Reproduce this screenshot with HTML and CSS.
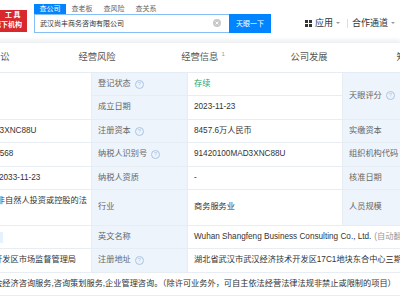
FILE: index.html
```html
<!DOCTYPE html>
<html>
  <head>
    <meta charset="UTF-8" />
    <link rel="stylesheet" href="styles.css">
  </head>

  <body>
    <div class="topbar">
      <div class="logo">
        <span class="logo-top">工具</span>
        <span>旗下机构</span>
      </div>
      <div class="search">
        <div class="search-tabs">
          <span class="search-tab active">查公司</span>
          <span class="search-tab">查老板</span>
          <span class="search-tab">查风险</span>
          <span class="search-tab">查关系</span>
        </div>
        <div class="search-row">
          <div class="search-input">
            <span>武汉尚丰商务咨询有限公司</span>
            <svg class="clear" viewBox="0 0 8 8" width="8" height="8">
              <circle cx="4" cy="4" r="4" fill="#c9c9c9" />
              <path d="M2.6 2.6 L5.4 5.4 M5.4 2.6 L2.6 5.4" stroke="#fff" stroke-width="0.9" />
            </svg>
          </div>
          <button class="search-btn">天眼一下</button>
        </div>
      </div>
      <div class="nav">
        <span class="nav-item">
          <svg class="apps" viewBox="0 0 7 7" width="7" height="7">
            <rect x="0" y="0" width="3" height="3" fill="#333" />
            <rect x="4" y="0" width="3" height="3" fill="#333" />
            <rect x="0" y="4" width="3" height="3" fill="#333" />
            <rect x="4" y="4" width="3" height="3" fill="#333" />
          </svg>
          应用<i class="caret"></i>
        </span>
        <span class="nav-sep"></span>
        <span class="nav-item">合作通道<i class="caret"></i></span>
      </div>
    </div>

    <div class="section-tabs">
      <span class="section-tab">法律诉讼</span>
      <span class="section-tab">经营风险</span>
      <span class="section-tab">经营信息<span class="tab-count">1</span></span>
      <span class="section-tab">公司发展</span>
      <span class="section-tab">知识产权</span>
    </div>

    <div class="info-table">
      <div class="cell label rows-2">法定代表人</div>
      <div class="cell value rows-2"></div>
      <div class="cell label">登记状态<span class="help">?</span></div>
      <div class="cell value status">存续</div>
      <div class="cell label rows-2">天眼评分<span class="help">?</span></div>
      <div class="cell value rows-2"></div>

      <div class="cell label">成立日期</div>
      <div class="cell value">2023-11-23</div>

      <div class="cell label">统一社会信用代码</div>
      <div class="cell value">91420100MAD3XNC88U</div>
      <div class="cell label">注册资本<span class="help">?</span></div>
      <div class="cell value">8457.6万人民币</div>
      <div class="cell label">实缴资本</div>
      <div class="cell value">-</div>

      <div class="cell label">工商注册号</div>
      <div class="cell value">420100000612568</div>
      <div class="cell label">纳税人识别号<span class="help">?</span></div>
      <div class="cell value">91420100MAD3XNC88U</div>
      <div class="cell label">组织机构代码</div>
      <div class="cell value">MAD3XNC8-8</div>

      <div class="cell label">营业期限</div>
      <div class="cell value">2023-11-23 至 2033-11-23</div>
      <div class="cell label">纳税人资质</div>
      <div class="cell value">-</div>
      <div class="cell label">核准日期</div>
      <div class="cell value">2023-11-23</div>

      <div class="cell label">企业类型</div>
      <div class="cell value wrap">有限责任公司(非自然人投资或控股的法人独资)</div>
      <div class="cell label">行业</div>
      <div class="cell value">商务服务业</div>
      <div class="cell label">人员规模</div>
      <div class="cell value">-</div>

      <div class="cell label">曾用名</div>
      <div class="cell value">暂无数据<span class="more">更多</span></div>
      <div class="cell label">英文名称</div>
      <div class="cell value cols-3">Wuhan Shangfeng Business Consulting Co., Ltd.<span class="note">(自动翻译)</span></div>

      <div class="cell label">登记机关</div>
      <div class="cell value">武汉经济技术开发区市场监督管理局</div>
      <div class="cell label">注册地址<span class="help">?</span></div>
      <div class="cell value cols-3">湖北省武汉市武汉经济技术开发区17C1地块东合中心三期B栋12层1205室</div>

      <div class="cell label">经营范围</div>
      <div class="cell value cols-5">一般项目：社会经济咨询服务,咨询策划服务,企业管理咨询。（除许可业务外，可自主依法经营法律法规非禁止或限制的项目）</div>
    </div>
  </body>
</html>
```

FILE: styles.css
```css
body {
  margin: 0;
  background: #fff;
  font-family: 'Liberation Sans', 'Noto Sans CJK SC', sans-serif;
  color: #333;
  overflow: hidden;
}

.topbar {
  display: flex;
  align-items: flex-start;
  height: 38px;
  background: #fff;
}
.logo {
  display: flex;
  flex-direction: column;
  align-items: flex-end;
  width: 40px;
  height: 22px;
  margin-left: -13px;
  margin-top: 10px;
  padding-right: 5px;
  box-sizing: border-box;
  background: #d8282e;
  color: #fff;
  font-size: 7px;
  font-weight: bold;
  line-height: 10px;
}
.logo-top {
  letter-spacing: 1.5px;
}

.search {
  margin-left: 7px;
  margin-top: 4px;
}
.search-tabs {
  display: flex;
  height: 9.5px;
}
.search-tab {
  padding: 0 5.5px;
  font-size: 7px;
  line-height: 9.5px;
  color: #666;
}
.search-tab.active {
  background: #0084ff;
  color: #fff;
}
.search-row {
  display: flex;
  height: 19px;
}
.search-input {
  display: flex;
  align-items: center;
  justify-content: space-between;
  width: 195px;
  padding: 0 8px 0 5px;
  box-sizing: border-box;
  border: 1px solid #86bff7;
  border-right: none;
  font-size: 7px;
  color: #333;
}
.search-btn {
  width: 42px;
  padding: 0;
  border: none;
  background: #0084ff;
  color: #fff;
  font-family: inherit;
  font-size: 7px;
}

.nav {
  display: flex;
  align-items: center;
  margin-left: auto;
  margin-top: 18px;
  padding-right: 5px;
  font-size: 9px;
  line-height: 10px;
  color: #333;
}
.nav-item {
  display: flex;
  align-items: center;
}
.apps {
  margin-right: 3px;
}
.caret {
  width: 0;
  height: 0;
  margin-left: 3px;
  border-left: 2px solid transparent;
  border-right: 2px solid transparent;
  border-top: 2.5px solid #999;
}
.nav-sep {
  width: 1px;
  height: 9px;
  margin: 0 4px 0 7px;
  background: #ddd;
}

.section-tabs {
  display: flex;
  margin-top: 4px;
  margin-left: -62px;
  border-top: 1px solid #eef0f3;
  border-bottom: 1px solid #e6ecf3;
  background: #fff;
  box-shadow: 0 -3px 3px #f2f3f5;
}
.section-tab {
  flex: none;
  width: 106px;
  text-align: center;
  font-size: 9.3px;
  line-height: 29px;
  color: #555;
}
.tab-count {
  margin-left: 3px;
  font-size: 6px;
  color: #999;
  vertical-align: top;
  line-height: 22px;
}

.info-table {
  display: grid;
  grid-template-columns: 96px 153px 96px 155px 96px 200px;
  margin-left: -157px;
  width: 796px;
  font-size: 8.2px;
  line-height: 12.4px;
}
.cell {
  display: flex;
  align-items: center;
  padding: 5px 2px 5px 6px;
  border-right: 1px solid #e8edf3;
  border-bottom: 1px solid #e8edf3;
  white-space: nowrap;
}
.label {
  background: #edf4fc;
  color: #666;
}
.value {
  color: #333;
}
.value.wrap {
  white-space: normal;
  align-items: flex-start;
}
.status {
  color: #1fa25f;
}
.rows-2 {
  grid-row: span 2;
}
.cols-3 {
  grid-column: span 3;
}
.cols-5 {
  grid-column: span 5;
}
.help {
  display: inline-block;
  width: 7px;
  height: 7px;
  margin-left: 4px;
  border: 1px solid #a9c3e2;
  border-radius: 50%;
  font-size: 5.5px;
  line-height: 7px;
  text-align: center;
  color: #a9c3e2;
}
.more {
  margin-left: 3px;
  padding: 0 4px;
  background: #e6f1fe;
  color: #0084ff;
  font-size: 7px;
  line-height: 11px;
}
.note {
  margin-left: 3px;
  color: #999;
}
```
